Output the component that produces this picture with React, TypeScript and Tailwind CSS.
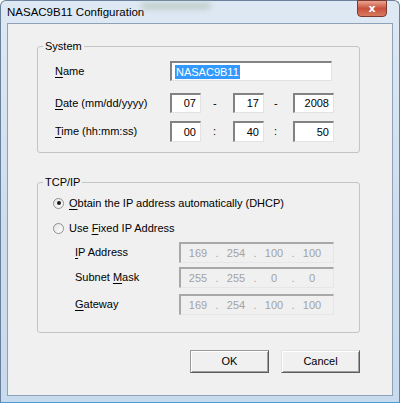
import React from 'react';

const font = { fontFamily: '"Liberation Sans", Arial, sans-serif' };

const U = ({ children }: { children: React.ReactNode }) => <span className="underline underline-offset-[2px]">{children}</span>;

const sunken =
    'h-full bg-white border-t-2 border-l-2 border-r border-b border-t-[#828282] border-l-[#828282] border-r-[#e3e3e3] border-b-[#e3e3e3]';

const NumBox = ({ value, w }: { value: string; w: string }) => (
    <div className={`${sunken} ${w} flex items-center justify-end pr-[4px] text-[11px] text-black`}>{value}</div>
);

const IpBox = ({ parts }: { parts: string[] }) => (
    <div className="h-full w-[155px] bg-[#f0f0f0] border-t-2 border-l-2 border-r border-b border-t-[#a8a8a8] border-l-[#a8a8a8] border-r-[#e6e6e6] border-b-[#e6e6e6] flex items-center pl-[2px] text-[11px] text-[#a3a3a3]">
        {parts.map((p, i) => (
            <React.Fragment key={i}>
                {i > 0 && <span className="w-[8px] text-center">.</span>}
                <span className="w-[30px] text-center">{p}</span>
            </React.Fragment>
        ))}
    </div>
);

const Radio = ({ checked }: { checked?: boolean }) => (
    <div className="w-[11px] h-[11px] rounded-full border border-[#8e8f8f] bg-gradient-to-br from-[#e4e4e4] to-white flex items-center justify-center">
        {checked && <div className="w-[4px] h-[4px] rounded-full bg-[#1a1a1a]" />}
    </div>
);

const Button = ({ label, isDefault }: { label: string; isDefault?: boolean }) => (
    <button
        className={`h-[23px] w-[79px] bg-[#f0f0f0] border text-[11px] text-black shadow-[inset_1px_1px_0_#ffffff,inset_-1px_-1px_0_#a0a0a0] ${
            isDefault
                ? 'border-[#5c5c5c] border-t-[#9a9a9a] border-l-[#9a9a9a]'
                : 'border-[#5c5c5c] border-t-[#e3e3e3] border-l-[#e3e3e3]'
        }`}
    >
        {label}
    </button>
);

export default function App() {
    return (
        <div className="w-[400px] h-[403px] overflow-hidden bg-white">
            <div
                className="w-[400px] h-[403px] flex flex-col rounded-t-[6px] border border-[#6a819c] border-b-[#4a9bd6] bg-gradient-to-b from-[#dfe9f4] via-[#cfdeee] to-[#c8daed]"
                style={font}
            >
                {/* title bar */}
                <div className="h-[22px] flex items-center justify-between pl-[6px] pr-[12px] relative">
                    <span className="text-[11.5px] text-black pt-[2px]">NASAC9B11 Configuration</span>
                    <div className="absolute left-[140px] top-[2px] w-[70px] h-[6px] rounded-full bg-[#a9bcae] blur-[3px] opacity-70" />
                    <div className="self-start w-[30px] h-[17px] -mt-px rounded-b-[4px] border border-[#7a3a30] bg-gradient-to-b from-[#e8a593] via-[#c8503c] to-[#d87a60] flex items-center justify-center">
                        <span className="text-white text-[11px] font-bold leading-none" style={{ fontFamily: '"DejaVu Sans", sans-serif' }}>
                            x
                        </span>
                    </div>
                </div>

                {/* client area */}
                <div className="flex-1 mx-[6px] mb-[6px] border border-[#8ea1b6] bg-[#f0f0f0] flex flex-col text-[11px] text-black">
                    <fieldset className="ml-[29px] mt-[16px] w-[323px] border border-[#c4c4c4] rounded-[3px] pl-[17px] pt-[8px] pb-[10px]">
                        <legend className="-ml-[12px] px-[2px] leading-[13px]">System</legend>
                        <div className="flex items-center h-[20px]">
                            <span className="w-[115px]">
                                <U>N</U>ame
                            </span>
                            <div className={`${sunken} w-[162px] flex items-center pl-[3px]`}>
                                <span className="bg-[#3399ff] text-white leading-[14px] px-px">NASAC9B11</span>
                            </div>
                        </div>
                        <div className="flex items-center h-[20px] mt-[12px]">
                            <span className="w-[115px]">
                                <U>D</U>ate (mm/dd/yyyy)
                            </span>
                            <NumBox value="07" w="w-[31px]" />
                            <span className="w-[32px] pl-[12px]">-</span>
                            <NumBox value="17" w="w-[31px]" />
                            <span className="w-[29px] pl-[10px]">-</span>
                            <NumBox value="2008" w="w-[41px]" />
                        </div>
                        <div className="flex items-center h-[21px] mt-[8px]">
                            <span className="w-[115px]">
                                <U>T</U>ime (hh:mm:ss)
                            </span>
                            <NumBox value="00" w="w-[31px]" />
                            <span className="w-[32px] pl-[12px]">:</span>
                            <NumBox value="40" w="w-[31px]" />
                            <span className="w-[29px] pl-[10px]">:</span>
                            <NumBox value="50" w="w-[41px]" />
                        </div>
                    </fieldset>

                    <fieldset className="ml-[29px] mt-[23px] w-[323px] border border-[#c4c4c4] rounded-[3px] pl-[15px] pt-[6px] pb-[17px]">
                        <legend className="-ml-[10px] px-[2px] leading-[13px]">TCP/IP</legend>
                        <div className="flex items-center h-[16px] gap-[5px]">
                            <Radio checked />
                            <span>
                                <U>O</U>btain the IP address automatically (DHCP)
                            </span>
                        </div>
                        <div className="flex items-center h-[16px] gap-[5px] mt-[9px]">
                            <Radio />
                            <span>
                                Use <U>F</U>ixed IP Address
                            </span>
                        </div>
                        <div className="flex items-center h-[21px] mt-[6px] pl-[22px]">
                            <span className="w-[104px]">
                                <U>I</U>P Address
                            </span>
                            <IpBox parts={['169', '254', '100', '100']} />
                        </div>
                        <div className="flex items-center h-[21px] mt-[4px] pl-[22px]">
                            <span className="w-[104px]">
                                Subnet <U>M</U>ask
                            </span>
                            <IpBox parts={['255', '255', '0', '0']} />
                        </div>
                        <div className="flex items-center h-[21px] mt-[6px] pl-[22px]">
                            <span className="w-[104px]">
                                <U>G</U>ateway
                            </span>
                            <IpBox parts={['169', '254', '100', '100']} />
                        </div>
                    </fieldset>

                    <div className="ml-[29px] mt-[17px] w-[323px] flex justify-end gap-[12px]">
                        <Button label="OK" isDefault />
                        <Button label="Cancel" />
                    </div>
                </div>
            </div>
        </div>
    );
}
